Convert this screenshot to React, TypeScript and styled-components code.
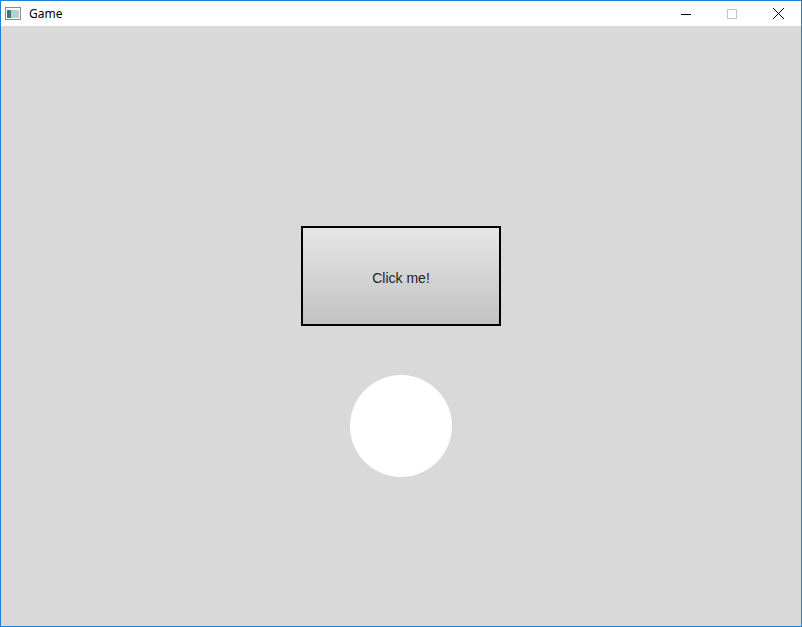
import React from "react";
import styled, { createGlobalStyle } from "styled-components";

const Global = createGlobalStyle`
  html, body { margin: 0; padding: 0; }
  body { width: 802px; height: 627px; overflow: hidden; font-family: "Segoe UI", "Noto Sans", "Liberation Sans", sans-serif; }
`;

const Frame = styled.div`
  width: 802px; height: 627px; box-sizing: border-box;
  border: 1px solid #1a83d8; display: flex; flex-direction: column;
`;
const TitleBar = styled.div`
  height: 25px; background: #fff; display: flex; align-items: center; flex-shrink: 0;
`;
const Title = styled.span`
  font-size: 12px; color: #000; margin-left: 8px; flex: 1;
  font-family: "Noto Sans", "Liberation Sans", sans-serif;
`;
const Ctrl = styled.div`
  width: 46px; height: 25px; display: flex; align-items: center; justify-content: center;
`;
const Content = styled.div`
  flex: 1; background: #d9d9d9; display: flex; flex-direction: column; align-items: center;
  padding-top: 200px;
`;
const Button = styled.div`
  width: 200px; height: 100px; box-sizing: border-box; border: 2px solid #000;
  background: linear-gradient(#e6e6e6, #c2c2c2);
  display: flex; align-items: center; justify-content: center;
  font-family: "Liberation Sans", Arial, sans-serif; font-size: 14px; color: #222;
  padding-top: 4px;
`;
const Circle = styled.div`
  width: 102px; height: 102px; border-radius: 50%; background: #fff; margin-top: 49px;
`;

export default function App() {
  return (
    <>
      <Global />
      <Frame>
        <TitleBar>
          <svg width="16" height="16" viewBox="0 0 16 16" style={{ marginLeft: 4 }}>
            <rect x="0.5" y="1.5" width="15" height="12" fill="#fff" stroke="#8a8a8a" />
            <rect x="2" y="4" width="4" height="8" fill="#3a7a7a" />
            <rect x="6" y="4" width="8" height="8" fill="#b8d0d0" />
          </svg>
          <Title>Game</Title>
          <Ctrl>
            <svg width="10" height="10"><line x1="0" y1="5.5" x2="10" y2="5.5" stroke="#000" /></svg>
          </Ctrl>
          <Ctrl>
            <svg width="10" height="10"><rect x="0.5" y="0.5" width="9" height="9" fill="none" stroke="#c4c4c4" /></svg>
          </Ctrl>
          <Ctrl>
            <svg width="11" height="11"><path d="M0 0L11 11M11 0L0 11" stroke="#000" /></svg>
          </Ctrl>
        </TitleBar>
        <Content>
          <Button>Click me!</Button>
          <Circle />
        </Content>
      </Frame>
    </>
  );
}
